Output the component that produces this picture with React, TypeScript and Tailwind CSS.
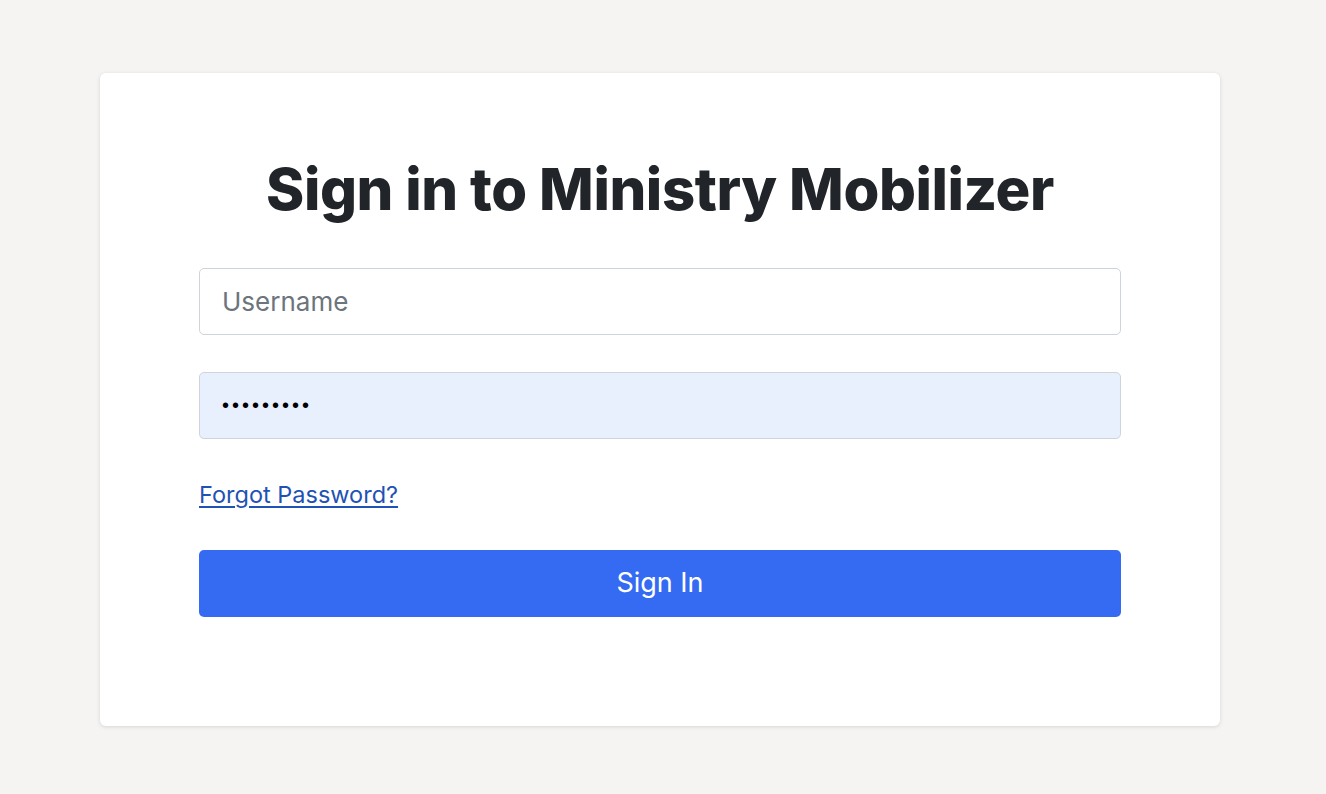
export default function App() {
  return (
    <div className="min-h-screen bg-[#f5f4f2] pl-[100px] pr-[106px] pt-[73px] pb-[69px] font-['Inter',sans-serif]">
      <div className="rounded-md bg-white px-[99px] pt-[84px] pb-[109px] shadow-[0_1px_4px_rgba(0,0,0,0.12)]">
        <h1 className="text-center text-[58px] leading-[64px] font-extrabold tracking-[-0.4px] text-[#212529]">
          Sign in to Ministry Mobilizer
        </h1>
        <form className="mt-[47px] flex flex-col" onSubmit={(e) => e.preventDefault()}>
          <input
            type="text"
            placeholder="Username"
            className="h-[67px] w-full rounded-[5px] border border-[#ced4da] bg-white px-[22px] text-[26px] text-[#212529] placeholder:text-[#6c757d] outline-none"
          />
          <input
            type="password"
            defaultValue="password1"
            className="mt-[37px] h-[67px] w-full rounded-[5px] border border-[#ced4da] bg-[#e8f0fe] px-[22px] font-['Liberation_Sans',sans-serif] text-[20px] tracking-[3px] text-black outline-none"
          />
          <div className="mt-[41px] h-[30px] leading-[30px]">
            <a href="#" className="text-[23.5px] text-[#1f52b5] underline underline-offset-[3px]">
              Forgot Password?
            </a>
          </div>
          <button
            type="submit"
            className="mt-[40px] h-[67px] w-full rounded-[5px] bg-[#346bf2] text-[27px] text-white"
          >
            Sign In
          </button>
        </form>
      </div>
    </div>
  )
}
